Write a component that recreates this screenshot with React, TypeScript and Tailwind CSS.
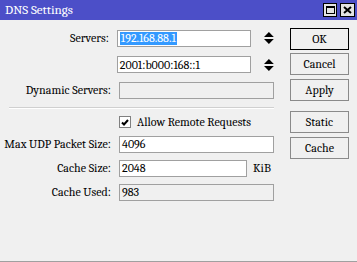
import React from 'react';

function Spinner() {
  return (
    <svg width="10" height="14" viewBox="0 0 10 14" className="ml-[5px]">
      <polygon points="5,1 10,6 0,6" fill="#000" />
      <polygon points="0,8 10,8 5,13" fill="#000" />
    </svg>
  );
}

function Field({
  value,
  width,
  disabled,
  selected,
}: {
  value?: string;
  width: string;
  disabled?: boolean;
  selected?: boolean;
}) {
  return (
    <div
      className={`${width} h-[17px] border border-[#a0a0a0] flex items-center px-[2px] leading-none ${
        disabled ? 'bg-[#f0f0f0]' : 'bg-white'
      }`}
    >
      {selected ? (
        <span className="bg-[#3399ff] text-white px-[1px] h-[13px] flex items-center">{value}</span>
      ) : (
        <span>{value}</span>
      )}
    </div>
  );
}

function Row({ label, children, className }: { label?: string; children: React.ReactNode; className?: string }) {
  return (
    <div className={`flex items-center gap-[8px] ${className ?? ''}`}>
      <div className="w-[111px] text-right whitespace-nowrap">{label}</div>
      {children}
    </div>
  );
}

function Btn({ label, primary, className }: { label: string; primary?: boolean; className?: string }) {
  return (
    <div
      className={`h-[22px] w-[59px] flex items-center justify-center border bg-[#f0f0f0] ${
        primary ? 'border-black' : 'border-[#8a8a8a]'
      } ${className ?? ''}`}
    >
      {label}
    </div>
  );
}

export default function App() {
  return (
    <div className="w-[357px] h-[262px] bg-[#f0f0f0] flex flex-col font-serif text-[12px] text-black border-b border-[#a0a0a0]">
      <div className="h-[20px] bg-[#4c4fc8] flex items-center pl-[5px] pr-[2px] text-white text-[13px]">
        <span className="flex-1">DNS Settings</span>
        <div className="w-[14px] h-[14px] bg-[#e4e4e4] border border-black flex items-center justify-center">
          <div className="w-[9px] h-[8px] border border-black border-t-2" />
        </div>
        <div className="w-[15px] h-[14px] bg-[#e4e4e4] border border-black flex items-center justify-center ml-[3px]">
          <svg width="9" height="8" viewBox="0 0 9 8">
            <path d="M1 1 L8 7 M8 1 L1 7" stroke="#000" strokeWidth="2" />
          </svg>
        </div>
      </div>
      <div className="flex">
        <div className="w-[274px] flex flex-col pt-[9px]">
          <Row label="Servers:">
            <Field value="192.168.88.1" width="w-[137px]" selected />
            <Spinner />
          </Row>
          <Row className="mt-[9px]">
            <Field value="2001:b000:168::1" width="w-[137px]" />
            <Spinner />
          </Row>
          <Row label="Dynamic Servers:" className="mt-[8px]">
            <Field width="w-[155px]" disabled />
          </Row>
          <div className="ml-[9px] mt-[8px] h-[2px] border-t border-[#d0d0d0] border-b border-b-white" />
          <Row className="mt-[7px] h-[12px]">
            <div className="flex items-center gap-[6px]">
              <div className="w-[12px] h-[12px] border border-[#808080] bg-white flex items-center justify-center">
                <svg width="8" height="7" viewBox="0 0 8 7">
                  <path d="M1 3.5 L3 5.5 L7 1" stroke="#000" strokeWidth="2" fill="none" />
                </svg>
              </div>
              <span>Allow Remote Requests</span>
            </div>
          </Row>
          <Row label="Max UDP Packet Size:" className="mt-[7px]">
            <Field value="4096" width="w-[155px]" />
          </Row>
          <Row label="Cache Size:" className="mt-[6px]">
            <Field value="2048" width="w-[128px]" />
            <span className="-ml-[2px]">KiB</span>
          </Row>
          <Row label="Cache Used:" className="mt-[6px]">
            <Field value="983" width="w-[155px]" disabled />
          </Row>
        </div>
        <div className="ml-[16px] flex flex-col pt-[8px]">
          <Btn label="OK" primary />
          <Btn label="Cancel" className="mt-[3px]" />
          <Btn label="Apply" className="mt-[4px]" />
          <Btn label="Static" className="mt-[10px]" />
          <Btn label="Cache" className="mt-[4px]" />
        </div>
      </div>
    </div>
  );
}
